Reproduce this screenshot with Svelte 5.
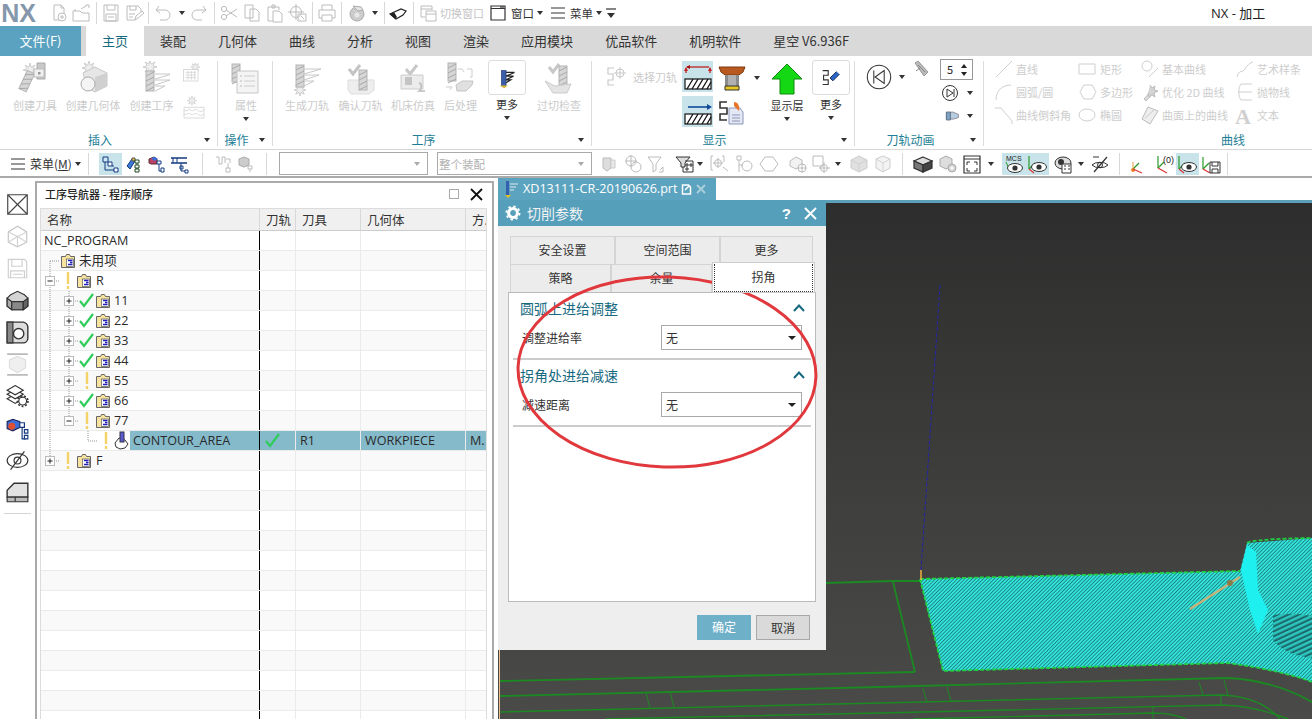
<script>
const G='#bcbcbc';
const line=(d,c=G,w=1)=>`<path d="${d}" fill="none" stroke="${c}" stroke-width="${w}"/>`;
const fillp=(d,f,s='none',w=1)=>`<path d="${d}" fill="${f}" stroke="${s}" stroke-width="${w}"/>`;
const burst=(x,y,r=7)=>{let p='';for(let i=0;i<16;i++){const a=i*Math.PI/8,q=i%2?r*.45:r;p+=(i?'L':'M')+(x+q*Math.cos(a)).toFixed(1)+' '+(y+q*Math.sin(a)).toFixed(1)}return fillp(p+'Z','#eee','#c4c4c4',.8)};
const drill=(x,y,h=22,s=0)=>`<g transform="translate(${x} ${y}) rotate(${s})"><rect x="-4" y="0" width="8" height="${h}" fill="#d6d6d6" stroke="#b4b4b4"/>${line(`M-4 5L4 1M-4 10L4 6M-4 15L4 11M-4 20L4 16`,'#a8a8a8')}</g>`;
const fins=(x,y)=>line(`M${x} ${y}L${x+17} ${y}L${x} ${y+5}M${x} ${y+6}L${x+15} ${y+6}L${x} ${y+11}M${x} ${y+12}L${x+10} ${y+12}L${x} ${y+17}`,'#c8c8c8');
const eye=(x=10,y=12,c='#333')=>`<ellipse cx="${x}" cy="${y}" rx="7.5" ry="4.5" fill="#fff" stroke="${c}"/><circle cx="${x}" cy="${y}" r="2.6" fill="${c}"/>`;
const hatch=(y)=>`<rect x="3" y="${y}" width="26" height="10" fill="#fff" stroke="#111" stroke-width="1.2"/>`+line(`M5 ${y+10}L11 ${y}M10 ${y+10}L16 ${y}M15 ${y+10}L21 ${y}M20 ${y+10}L26 ${y}M25 ${y+10}L29 ${y+3}`,'#111',1.3);
const sshape=(c='#666')=>line('M8 2H2V8H7V14H2V19H8',c,1.2);

const ic={
new:line('M5 2h7l3 3v12H5zM12 2v3h3')+`<circle cx="13" cy="14" r="4" fill="#fff" stroke="${G}"/>`+line('M13 12v4M11 14h4'),
open:line('M2 8h7l2 2h7v8H2zM4 8V6M10 6l5-3v-1M15 2h3v3'),
save:line('M3 2h14v16H3zM6 2v5h8V2M5 11h10v7H5zM7 14h6'),
saveas:line('M3 3h11l3 3v3M3 3v14h8M6 3v4h6V3M5 11h6M5 14h4')+line('M11 17l1-4 6-5 2 2-6 5z'),
undo:line('M6 3L3 7l4 3M3 7h9a5 5 0 0 1 0 10H7'),
redo:line('M14 3l3 4-4 3M17 7H8a5 5 0 0 0 0 10h5'),
cut:`<circle cx="5" cy="14" r="2.6" fill="none" stroke="${G}"/><circle cx="5" cy="6" r="2.6" fill="none" stroke="${G}"/>`+line('M7 7l11 7M7 13l11-7'),
copy:line('M3 2h8v13H3zM8 6h6l3 3v9H8z'),
paste:line('M3 4h11v3M3 4v14h5M7 2h3v3H7zM8 8h6l3 3v8H8z'),
clone:`<circle cx="8" cy="9" r="5.5" fill="none" stroke="${G}"/>`+line('M8 1v16M0 9h16M10 11h8v7h-8zM13 13l3 3'),
print:line('M5 7V2h10v5M2 7h16v8h-3M5 15H2V7M5 12h10v6H5z'),
blob:`<circle cx="10" cy="11" r="7" fill="#ccc" stroke="#aaa"/>`+fillp('M6 3l8 1 2 3-5 1z','#e6e6e6','#aaa')+`<circle cx="10" cy="12" r="2.5" fill="#e8e8e8"/>`,
erase:fillp('M2 11L13 6l5 2-3 4-7 4z','#fff','#222',1.2)+fillp('M2 11l4-2 3 5-2 2z','#222'),
swin:line('M3 3h11v4M3 3v11h4M3 6h11M8 8h10v10H8zM8 11h10'),
win:`<path d="M3 3h14v14H3z" fill="#fff" stroke="#333" stroke-width="1.2"/>`+line('M3 5.5h14','#333',1)+line('M12 4h4','#333',1.2),
burger:line('M3 5h14M3 10h14M3 15h14','#333',1),
qa:line('M5 6h10','#333',1.2)+fillp('M6 10h8l-4 5z','#333'),

s1:fillp('M3 3h5v5H3z','#cfe6f5','#123a80')+fillp('M8 8h4v4H8z','#fff','#123a80')+line('M5 8v8h9M12 12h2','#123a80')+fillp('M14 14h4v4h-4z','#fff','#123a80'),
s2:fillp('M4 12l5-7 3 2-5 8z','#3b7bd6','#123a80')+fillp('M9 4h3v3H9z','#f0c040','#555')+line('M14 6v12','#1a4a20')+fillp('M12 6h4v3h-4zM12 11h4v3h-4zM12 15h4v3h-4z','#fff','#1a4a20'),
s3:fillp('M3 5l5-2 3 2v5H5L3 9z','#c04068','#533')+fillp('M5 4l4-1 3 2-4 2z','#3a6fd8')+line('M13 9v8h3','#123a80')+fillp('M11 7h4v3h-4zM15 14h3v4h-3z','#fff','#123a80'),
s4:line('M2 4h16M2 9h16','#123a80',1.5)+line('M4 4v5M8 4v5','#123a80')+fillp('M11 12h3v3h-3zM16 16h3v3h-3z','#fff','#123a80')+line('M12 9v8h4','#123a80'),
s5:line('M3 3h3v7h3V3h3v6M13 5h4v4M15 9v9',G)+fillp('M13 14h4v4h-4z','#fff',G),
s6:fillp('M2 5l5-2 5 2v6l-5 2-5-2z','#ccc','#aaa')+line('M13 12v6',G)+fillp('M11 12h4v3h-4z','#fff',G),
cyl:fillp('M4 4h8v10l-4 3-4-3z','#ddd','#bbb')+fillp('M12 6h4v8h-4z','#e8e8e8','#ccc'),
lk:`<circle cx="7" cy="7" r="5" fill="none" stroke="${G}"/><circle cx="12" cy="13" r="5" fill="none" stroke="${G}"/>`+line('M1 7h12M7 1v12'),
fun:line('M1 3h13L9 10v6l-3 2v-8zM13 16l3-3v5h-4'),
fun2:fillp('M1 3h14L10 9v4H6V9z','#ddd','#333')+line('M10 7h8v11H8v-5M11 10h2v2h-2zM15 10h2v2h-2zM11 14h2v2h-2z','#333'),
brk:line('M3 2H1v14h2M12 2h2v6')+`<circle cx="8" cy="9" r="3.5" fill="none" stroke="${G}"/>`+line('M8 4v10M3 9h10M13 13l5 4'),
tc:fillp('M3 2h4v4H3z','#fff',G)+line('M5 6v12M5 11h4')+`<circle cx="13" cy="12" r="5" fill="none" stroke="${G}"/>`,
hex:line('M6 3h8l5 7-5 7H6l-5-7z'),
box2:fillp('M2 7l6-4 6 3v5l-6 4-6-3z','#f2f2f2',G)+`<circle cx="14" cy="14" r="4" fill="#fff" stroke="${G}"/>`+line('M14 9v10M9 14h10'),
sqc:line('M2 2h10v10H2zM13 8v11M8 14h11')+`<circle cx="13" cy="14" r="3.5" fill="none" stroke="${G}"/>`,
cube1:fillp('M10 2l8 4v8l-8 4-8-4V6z','#e0e0e0','#ccc')+line('M2 6l8 4 8-4M10 10v8','#cfcfcf'),
cube2:fillp('M9 2l7 3v9l-7 4-7-4V5z','#f3f3f3','#ccc')+line('M2 5l7 4 7-4M9 9v9','#d4d4d4'),
solid:fillp('M10 3l9 4-9 4-9-4z','#ddd','#333',1.2)+fillp('M1 7l9 4v7l-9-4z','#777','#333',1.2)+fillp('M19 7l-9 4v7l9-4z','#444','#333',1.2),
solidg:fillp('M2 5l6-3 6 3v7l-6 3-6-3z','#ddd','#aaa')+`<circle cx="14" cy="14" r="4" fill="#d4d4d4" stroke="#aaa"/><circle cx="14" cy="14" r="1.6" fill="#fff"/>`,
fit:fillp('M2 2h16v17H2z','#fff','#333',1.2)+line('M2 5h16','#333')+line('M5 8h3M5 8v3M15 8h-3M15 8v3M5 17h3M5 17v-3M15 17h-3M15 17v-3','#333'),
mcs:`<text x="2" y="7" font-size="7" font-family="Liberation Sans" fill="#222">MCS</text>`+line('M2 8l4 9','#2a9a2a')+eye(11,14),
axeye:line('M2 2v13','#2a9a2a',1.2)+line('M2 15l6-6','#2a9a2a',1.2)+line('M2 15l5 4','#d33',1.2)+eye(12,13),
eyel:fillp('M2 9a8 6 0 0 1 16 0 8 6 0 0 1-16 0z','#ddd','#333')+`<circle cx="8" cy="8" r="3" fill="#333"/>`+fillp('M9 10h9v9H9z','#fff','#333')+line('M11 12h2M15 12h2M11 15h2M15 15h2','#333'),
noeye:line('M2 11a9 5 0 0 1 16 0 9 5 0 0 1-16 0z','#333')+`<circle cx="10" cy="11" r="2.5" fill="none" stroke="#333"/>`+line('M4 18L17 3M3 3h6','#333',1.2),
ax0:fillp('M6 14a2 2 0 1 0 .1 0','#f08020')+line('M6 15L12 9','#2a9a2a',1.3)+line('M6 15V8','#e0a030',1)+line('M6 15l9 4','#d33',1.3),
ax1:line('M3 2v12','#2a9a2a',1.2)+line('M3 14l6-6','#2a9a2a',1.2)+line('M3 14l9 5','#d33',1.2)+`<text x="8" y="9" font-size="9" font-family="Liberation Sans" fill="#222">(0)</text>`,
axsv:line('M2 3v12','#2a9a2a',1.2)+line('M2 15l6-6','#2a9a2a',1.2)+line('M2 15l7 4','#d33',1.2)+fillp('M9 8h10v11H9z','#fff','#333')+line('M11 8v4h6V8M11 19v-4h6v4','#333'),

backb:`<circle cx="10" cy="10" r="9" fill="none" stroke="#333" stroke-width=".8"/>`+line('M6 5v10M14 5L7 10l7 5z','#333',.8),
fwd:`<circle cx="10" cy="10" r="7.5" fill="none" stroke="#333"/>`+line('M14 6v8M7 6l6 4-6 4z','#333'),
cone:fillp('M3 6l8-1 7 3v4l-7 2-8-1z','#b8cde0','#778')+fillp('M3 5h5v10H3z','#7fa3c4','#567'),
pin:fillp('M4 3l3-2 10 11-4 4z','#b9b9b9','#999')+line('M7 5l7 7M9 8l-4 3','#888'),
ln:line('M2 18L18 2','#cfcfcf'),
rect:line('M1 5h16v10H1z','#cfcfcf'),
base:`<circle cx="7" cy="7" r="5" fill="none" stroke="#cfcfcf"/>`+line('M9 18l9-9','#cfcfcf'),
spl:line('M2 18c2-8 6-4 8-8s5-6 8-7','#cfcfcf'),
arc:line('M2 18C2 8 9 3 17 3','#cfcfcf'),
poly:line('M6 3h8l4 7-4 7H6l-4-7z','#cfcfcf'),
opt:fillp('M4 17l8-9 2 2-8 9z','#ddd','#bbb')+fillp('M10 3l2 3 3-2-1 4 4 1-4 2 1 4-3-2-3 2-1-4','#d4d4d4','#bbb'),
par:line('M17 2H6C3 6 3 14 6 18h11M3 10h14','#cfcfcf'),
cham:line('M1 3h6l11 13v3','#cfcfcf'),
ell:`<ellipse cx="9" cy="10" rx="8" ry="6" fill="none" stroke="#cfcfcf"/>`,
surf:fillp('M8 2l10 4-8 13-8-5z','#eee','#bbb')+line('M5 13l9-8','#ccc'),
A:`<text x="0" y="19" font-size="22" font-family="Liberation Serif" font-weight="bold" fill="#d0d0d0">A</text>`,

crx:line('M1.5 1.5h17v17h-17zM1.5 1.5l17 17M18.5 1.5l-17 17','#444',1),
wire:fillp('M10 1l8 5v9l-8 4-8-4V6z','none','#c4c4c4')+line('M2 6l8 4 8-4M10 10v9M2 15l8-5 8 5','#d4d4d4'),
disk:line('M2 2h14l2 2v14H2zM5 2v6h9V2M4 12h12v6H4zM6 15h8','#cfcfcf'),
body:fillp('M4 5l6-3 6 3 3 3v7l-4 3H5l-4-3V8z','#d4d4d4','#333')+fillp('M1 8l4 3v7l-4-3z','#aaa','#333')+fillp('M5 11h10v7H5z','#888','#333')+fillp('M15 11l4-3v7l-4 3z','#666','#333'),
hole:fillp('M1 1h14a5 5 0 0 1 4 4v10a4 4 0 0 1-4 4H1z','#ddd','#333',1.2)+fillp('M1 1h5v18H1z','#888','#333')+`<circle cx="11" cy="11" r="4.5" fill="#fff" stroke="#333" stroke-width="1.2"/>`,
flat:line('M1 1h18M1 19h18','#bbb',1.6)+fillp('M10 3l7 3v7l-7 4-7-4V6z','#efefef','#ddd'),
layer:fillp('M1 12l7-4 7 4-7 4z','#fff','#333')+fillp('M1 8l7-4 7 4-7 4z','#fff','#333')+fillp('M1 4.5l7-4 7 4-7 4z','#fff','#333')+`<circle cx="14.5" cy="14" r="3.4" fill="#fff" stroke="#333"/><circle cx="14.5" cy="14" r="4.6" fill="none" stroke="#333" stroke-width="1.4" stroke-dasharray="1.6 1.6"/>`,
assem:fillp('M1 4l5-2 6 2v5l-6 3-5-2z','#3a6fd8','#225')+`<circle cx="5" cy="8" r="3" fill="#e05030"/>`+line('M14 7v12h3','#123a80')+fillp('M12 5h4v4h-4zM16 11h3v3h-3zM16 16h3v3h-3z','#fff','#123a80'),
hide:line('M1 10a9 6 0 0 1 18 0 9 6 0 0 1-18 0z','#333')+`<circle cx="10" cy="10" r="3" fill="none" stroke="#333"/>`+line('M4 18L16 2','#333'),
wedge:fillp('M7 2h12v12H1V8z','#e2e2e2','#333',1.2)+fillp('M1 14h18v4H1z','#bbb','#333')+line('M8 14v4','#333'),
};

const big={
ctool:burst(13,9)+drill(14,11,20,25)+fillp('M20 2h8v16H20z','#c8c8c8','#aaa')+fillp('M17 8h10v8H17z','#f0f0f0','#bbb')+`<rect x="21" y="11" width="2.5" height="2.5" fill="#999"/>`,
cgeo:burst(14,7)+fillp('M8 12l12-6 12 6v13l-12 6-8-4z','#e6e6e6','#c8c8c8')+fillp('M20 16l12-4v13l-12 6z','#d0d0d0')+`<circle cx="13" cy="23" r="7" fill="#f4f4f4" stroke="#aaa"/>`,
cop:burst(16,6)+drill(16,10,20)+fins(21,13),
prop:drill(8,3,18)+fillp('M9 10h21v22H9z','#f4f4f4','#c6c6c6')+line('M16 15h11M16 20h11M16 25h11','#ccc')+line('M12 15h2M12 20h2M12 25h2','#bbb'),
gen:burst(11,29,6)+drill(11,4,22)+fins(15,8),
ver:line('M6 8l4 5 7-9','#c4c4c4',3)+fillp('M5 19h26v10l-5 4H8l-3-4z','#eee','#ddd')+drill(20,9,20),
sim:line('M11 8l4 5 7-9','#c8c8c8',3)+fillp('M6 14h22v14H6z','#ececec','#ccc')+fillp('M10 16h7v8h-7z','#c4c4c4')+line('M24 22c3 0 3 6 0 8h6','#bbb',1.5),
post:drill(9,2,18)+fillp('M13 24l6-4h11l-1 4-6 6H14z','#e0e0e0','#c4c4c4')+line('M15 8h4l2 3M27 8h2v8h-2M24 8h3M3 26h6l-2 3','#ccc'),
cut:line('M8 6l4 5 6-8','#c8c8c8',3)+drill(22,5,20)+fillp('M4 20l10 5 16-2-4 9H12z','#e4e4e4','#ccc'),
more1:`<rect x="8" y="6" width="5" height="16" fill="#3a5ea8" stroke="#223a70" stroke-width=".7"/>`+`<path d="M6 22h9l-4 3z" fill="#d9b030"/>`+line('M13 8h9l-9 4M13 12h8l-8 4M13 16h5l-5 3','#222',1.3),
more2:line('M5 6H11V11H6V16H11V21H5','#333',1.2)+fillp('M13 14l7-7 3 3-7 7z','#2a66c8','#124')+line('M19 6l4 4','#9bc'),
c1:burst(20,6)+`<rect x="2" y="10" width="22" height="17" fill="#fff" stroke="#c8c8c8"/>`+line('M5 14h16M5 18h16M5 22h16M9 12v13M14 12v13M19 12v13','#ccc'),
c2:burst(15,7)+line('M3 17h30v16H3zM3 21c4 4 6-3 10 0s6-3 10 0 6 3 10 0M3 27c4 3 6-3 10 0s6-3 10 0 6 3 10 0','#c8c8c8'),
selt:sshape('#c8c8c8')+`<circle cx="14" cy="7" r="4" fill="none" stroke="#c8c8c8"/>`+line('M14 1v12M8 7h12','#c8c8c8'),
h1:line('M4 11v-5M28 11v-5','#b22',1.3)+line('M5 5h22','#b22',1.3)+fillp('M2 9l2-4 2 4zM26 9l2-4 2 4z','#c22')+fillp('M4 5l4-2v4z','#a11')+hatch(17),
h2:line('M6 10h19','#124a9a',1.6)+fillp('M25 7l5 3-5 3z','#124a9a')+hatch(17),
toolc:fillp('M1 1h26l-2 5-4 3H7L3 6z','#b85a20','#7a3a10')+fillp('M7 9h14v11H7z','#8a8a8a')+fillp('M10 9h8v11h-8z','#b0b0b0')+fillp('M7 20h14v4H7z','#e8c820','#333'),
doc:line('M9 2H2v6h7v6H2v6h7','#333',1.6)+fillp('M11 8h11l3 4v12H11z','#e4e8f4','#8a97b8')+fillp('M16 2c4 0 6 4 5 9l-3-3-2-2z','#e8762a')+line('M14 15h8M14 18h8M14 21h8','#8a97b8'),
arrow:fillp('M15 1l15 15h-8v15H8V16H0z','#15d815','#0e8a0e'),
};

const I=(cx,n,o={})=>({k:'i',x:cx-(o.b||20)/2,w:o.b||20,n,on:o.on});
const S=x=>({k:'s',x,w:1});
const C=cx=>({k:'c',x:cx-3.5,w:7});
const T=(x,w,text,cls='')=>({k:'t',x,w,text,cls});
const flow=(a,x0=0)=>{let e=x0;return a.map(it=>{const r={...it,ml:it.x-e};e=it.x+it.w;return r})};

const title=[
I(59,'new'),I(81,'open'),S(96),I(111,'save'),I(134,'saveas'),S(148),I(163,'undo'),C(182),I(200,'redo'),S(215),
I(230,'cut'),I(253,'copy'),I(276,'paste'),I(299,'clone'),S(313),I(328,'print'),S(342),I(358,'blob'),C(376),S(386),I(400,'erase'),S(415),I(430,'swin'),
T(442,44,'切换窗口','dis'),I(500,'win'),T(513,23,'窗口'),C(542),I(561,'burger',{b:14}),T(573,23,'菜单'),C(602),I(615,'qa',{b:12})
];
const tools=[
I(18,'burger',{b:14}),T(30,41,'菜单(M)','mn'),C(78),S(89),
I(111,'s1',{b:23,on:1}),I(134,'s2',{b:22}),I(157,'s3',{b:22}),I(180,'s4',{b:22}),S(203),I(224,'s5',{b:22}),I(248,'s6',{b:22}),S(267),
{k:'combo',x:280,w:149,text:''},{k:'combo',x:438,w:155,text:'整个装配'},
I(610,'cyl',{b:20}),I(635,'lk',{b:22}),I(658,'fun',{b:20}),I(686,'fun2',{b:20}),C(701),I(722,'brk',{b:20}),I(746,'tc',{b:20}),I(771,'hex',{b:20}),I(800,'box2',{b:20}),I(823,'sqc',{b:20}),C(840),I(862,'cube1',{b:20}),I(887,'cube2',{b:20}),S(905),
I(926,'solid',{b:20}),I(951,'solidg',{b:20}),I(975,'fit',{b:20}),C(994),I(1018,'mcs',{b:24,on:1}),I(1041,'axeye',{b:23,on:1}),I(1067,'eyel',{b:20}),C(1085),I(1105,'noeye',{b:20}),S(1124),
I(1142,'ax0',{b:20}),I(1170,'ax1',{b:20}),I(1192,'axeye',{b:23,on:1}),I(1216,'axsv',{b:20}),S(1232)
];
const curve=[
[I(1004,'ln',{b:18}),T(1016,24,'直线'),I(1088,'rect',{b:18}),T(1100,24,'矩形'),I(1150,'base',{b:18}),T(1162,46,'基本曲线'),I(1245,'spl',{b:18}),T(1257,46,'艺术样条')],
[I(1004,'arc',{b:18}),T(1016,40,'圆弧/圆'),I(1088,'poly',{b:18}),T(1100,36,'多边形'),I(1150,'opt',{b:18}),T(1162,66,'优化 2D 曲线'),I(1245,'par',{b:18}),T(1257,36,'抛物线')],
[I(1004,'cham',{b:18}),T(1016,56,'曲线倒斜角'),I(1088,'ell',{b:18}),T(1100,24,'椭圆'),I(1150,'surf',{b:18}),T(1162,68,'曲面上的曲线'),I(1245,'A',{b:18}),T(1257,24,'文本')]
];
const tabs=['主页','装配','几何体','曲线','分析','视图','渲染','应用模块','优品软件','机明软件','星空 V6.936F'];
const rail=['crx','wire','disk','body','hole','flat','layer','assem','hide','wedge'];

const nodes=[
{t:'NC_PROGRAM',x:44},
{t:'未用项',x:79,f:61,h:[50,60],v:[[50,10,20]]},
{t:'R',x:96,e:50,m:1,b:68,f:77,v:[[50,0,20]]},
{t:'11',x:114,e:69,c:80,f:96,v:[[50,0,20],[69,0,20]]},
{t:'22',x:114,e:69,c:80,f:96,v:[[50,0,20],[69,0,20]]},
{t:'33',x:114,e:69,c:80,f:96,v:[[50,0,20],[69,0,20]]},
{t:'44',x:114,e:69,c:80,f:96,v:[[50,0,20],[69,0,20]]},
{t:'55',x:114,e:69,b:87,f:96,v:[[50,0,20],[69,0,20]]},
{t:'66',x:114,e:69,c:80,f:96,v:[[50,0,20],[69,0,20]]},
{t:'77',x:114,e:69,m:1,b:87,f:96,v:[[50,0,20],[69,0,10]]},
{t:'CONTOUR_AREA',x:130,sel:1,b:106,op:1,h:[88,98],v:[[50,0,20],[88,0,10]],tool:'R1',geo:'WORKPIECE',mth:'M.',chk:1},
{t:'F',x:96,e:50,b:68,f:77,v:[[50,0,10]]},
];
const rows=Array.from({length:25},(_,i)=>nodes[i]||{});
const folder=x=>`<g transform="translate(${x} 3)"><path d="M.5 2.5h4l1-2h3l1 2h4v11H.5z" fill="#f6e3a0" stroke="#666"/><rect x="5.5" y="5" width="7" height="7.5" fill="#fff" stroke="#444" stroke-width=".6"/><path d="M7 6.5h4.5M9 8.5h2.5M7 10.5h4.5" stroke="#2222bb" stroke-width="1.3" fill="none"/></g>`;
const bang=x=>`<rect x="${x-1.2}" y="1" width="2.4" height="12" fill="#f5d266"/><rect x="${x-1.2}" y="15" width="2.4" height="3" fill="#f5d266"/>`;
const check=(x,y=0)=>`<path d="M${x} ${y+10}l4 5 9-12" fill="none" stroke="#2fcc5a" stroke-width="2.2"/>`;
const expd=(x,m)=>`<rect x="${x-4.5}" y="5.5" width="9" height="9" fill="#fff" stroke="#bbb"/><path d="M${x-2.5} 10h5${m?'':`M${x} 7.5v5`}" stroke="#222" fill="none"/>`;
const optic=x=>`<path d="M${x+1} 12l4-5 6 2 3 4-3 4-5 1-4-2z" fill="#fff" stroke="#333"/><rect x="${x+6}" y="1" width="4" height="10" fill="#5b5bd0" stroke="#334"/>`;
const tree=r=>{let s='';for(const [x,a,b] of (r.v||[]))s+=`<path d="M${x} ${a}V${b}" stroke="#999" stroke-dasharray="1 1" fill="none"/>`;
 const hs=r.h||(r.e?[r.e,(r.e+9)]:null);if(hs)s+=`<path d="M${hs[0]} 10H${hs[1]}" stroke="#999" stroke-dasharray="1 1" fill="none"/>`;
 if(r.e)s+=expd(r.e,r.m);if(r.b)s+=bang(r.b);if(r.c)s+=check(r.c);if(r.f)s+=folder(r.f);if(r.op)s+=optic(r.b+8);return s};
const treeW=r=>r.sel?89:r.x-43;
</script>

{#snippet strip(items,x0=0)}
 <div class="strip">
 {#each flow(items,x0) as it}
  {#if it.k==='i'}
   <span class="slot" class:on={it.on} style="margin-left:{it.ml}px;width:{it.w}px"><svg width="20" height="20" viewBox="0 0 20 20">{@html ic[it.n]}</svg></span>
  {:else if it.k==='s'}
   <span class="sp" style="margin-left:{it.ml}px"></span>
  {:else if it.k==='c'}
   <span class="caret" style="margin-left:{it.ml}px"></span>
  {:else if it.k==='t'}
   <span class="stx {it.cls}" style="margin-left:{it.ml}px;width:{it.w}px">{#if it.cls==='mn'}菜单(<u>M</u>){:else}{it.text}{/if}</span>
  {:else}
   <span class="combo" style="margin-left:{it.ml}px;width:{it.w}px">{it.text}<i class="caret light"></i></span>
  {/if}
 {/each}
 </div>
{/snippet}

{#snippet bigb(n,label,w,opt={})}
 <div class="big" style="width:{w}px">
  <div class="bigicon" class:boxed={opt.box}><svg width={opt.box?26:36} height={opt.box?26:36} viewBox={opt.box?'0 0 28 28':'0 0 36 36'}>{@html big[n]}</svg></div>
  <span class="lab" class:act={opt.act}>{label}</span>
  {#if opt.caret}<span class="caret mid"></span>{/if}
 </div>
{/snippet}

{#snippet foot(label)}
 <div class="foot"><span>{label}</span><i class="caret"></i></div>
{/snippet}

<div class="app">
 <header class="titlebar">
  <span class="nx">NX</span>
  {@render strip(title,36)}
  <span class="apptitle">NX - 加工</span>
 </header>

 <nav class="tabs">
  <span class="file">文件(F)</span>
  <span class="tgap"></span>
  {#each tabs as t,i}<span class="tab" class:active={i===0}>{t}</span>{/each}
 </nav>

 <section class="ribbon">
  <div class="grp g1">
   <div class="body">
    {@render bigb('ctool','创建刀具',58)}
    {@render bigb('cgeo','创建几何体',58)}
    {@render bigb('cop','创建工序',59)}
    <div class="smallcol">
     <svg width="24" height="24" viewBox="0 0 36 36">{@html big.c1}</svg>
     <svg width="24" height="24" viewBox="0 0 36 36">{@html big.c2}</svg>
    </div>
   </div>
   {@render foot('插入')}
  </div>
  <div class="grp g2">
   <div class="body">{@render bigb('prop','属性',56,{caret:1})}</div>
   {@render foot('操作')}
  </div>
  <div class="grp g3">
   <div class="body">
    {@render bigb('gen','生成刀轨',54)}
    {@render bigb('ver','确认刀轨',53)}
    {@render bigb('sim','机床仿真',52)}
    {@render bigb('post','后处理',43)}
    {@render bigb('more1','更多',50,{box:1,caret:1,act:1})}
    {@render bigb('cut','过切检查',54)}
   </div>
   {@render foot('工序')}
  </div>
  <div class="grp g4">
   <div class="body">
    <div class="selp"><svg width="22" height="22" viewBox="0 0 22 22">{@html big.selt}</svg><span class="lab">选择刀轨</span></div>
    <div class="hcol">
     <span class="hl"><svg width="32" height="30" viewBox="0 0 32 30">{@html big.h1}</svg></span>
     <span class="hl"><svg width="32" height="30" viewBox="0 0 32 30">{@html big.h2}</svg></span>
    </div>
    <div class="ccol">
     <div class="crow"><svg width="28" height="25" viewBox="0 0 28 25">{@html big.toolc}</svg><span class="caret"></span></div>
     <div class="crow"><svg width="26" height="26" viewBox="0 0 26 26">{@html big.doc}</svg></div>
    </div>
    <div class="big" style="width:50px">
     <div class="bigicon"><svg width="30" height="32" viewBox="0 0 30 32">{@html big.arrow}</svg></div>
     <span class="lab act">显示层</span><span class="caret mid"></span>
    </div>
    {@render bigb('more2','更多',38,{box:1,caret:1,act:1})}
   </div>
   {@render foot('显示')}
  </div>
  <div class="grp g5">
   <div class="body">
    <div class="animb"><svg width="26" height="26" viewBox="0 0 20 20">{@html ic.backb}</svg><span class="caret"></span></div>
    <div class="animc">
     <div class="arow"><svg width="20" height="20" viewBox="0 0 20 20">{@html ic.pin}</svg><span class="spin">5<i><b></b><b class="dn"></b></i></span></div>
     <div class="arow r"><svg width="20" height="20" viewBox="0 0 20 20">{@html ic.fwd}</svg><span class="caret"></span></div>
     <div class="arow r"><svg width="16" height="16" viewBox="0 0 20 20">{@html ic.cone}</svg><span class="caret"></span></div>
    </div>
   </div>
   {@render foot('刀轨动画')}
  </div>
  <div class="grp g6">
   <div class="body curves">
    {#each curve as r}{@render strip(r,984)}{/each}
   </div>
   {@render foot('曲线')}
  </div>
 </section>

 <section class="toolbar">{@render strip(tools)}</section>

 <main class="main">
  <aside class="rail">
   {#each rail as n}<span class="ri"><svg width="23" height="23" viewBox="0 0 20 20">{@html ic[n]}</svg></span>{/each}
   <span class="railsep"></span>
  </aside>

  <section class="panel">
   <div class="phead">
    <strong>工序导航器 - 程序顺序</strong>
    <span class="restore"></span>
    <svg width="13" height="13" viewBox="0 0 13 13"><path d="M1 1l11 11M12 1L1 12" stroke="#111" stroke-width="1.8"/></svg>
   </div>
   <div class="table">
    <div class="thead">
     <span class="c0">名称</span><span class="c1">刀轨</span><span class="c2">刀具</span><span class="c3">几何体</span><span class="c4">方.</span>
    </div>
    {#each rows as r,i}
     <div class="row" class:alt={i%2===1} class:sel={r.sel}>
      <div class="c0">
       {#if r.t}
       <svg class="tree" width={treeW(r)} height="20" viewBox="41 0 {treeW(r)} 20">{@html tree(r)}</svg>
       <span class="nm">{r.t}</span>
       {/if}
      </div>
      <div class="c1">{#if r.chk}<svg width="20" height="20" viewBox="0 0 20 20">{@html check(4)}</svg>{/if}</div>
      <div class="c2">{r.tool||''}</div>
      <div class="c3">{r.geo||''}</div>
      <div class="c4">{r.mth||''}</div>
     </div>
    {/each}
   </div>
  </section>

  <section class="work">
   <div class="filetabs">
    <div class="filetab">
     <svg width="16" height="18" viewBox="0 0 16 18"><rect x="3" y="1" width="3" height="14" fill="#355fb0"/><path d="M7 4h8M7 7h6M7 10h4" stroke="#dfe8ee" fill="none"/><path d="M2 15h6l-3 3z" fill="#e8c020"/></svg>
     <span>XD13111-CR-20190626.prt</span>
     <svg width="11" height="11" viewBox="0 0 11 11"><path d="M1.5 1h6l2 2v7h-8z" fill="none" stroke="#fff" stroke-width="1.5"/><path d="M4 6l4-4" stroke="#fff" stroke-width="1.5"/></svg>
     <svg width="10" height="10" viewBox="0 0 10 10"><path d="M1 1l8 8M9 1L1 9" stroke="#a9cfdd" stroke-width="2"/></svg>
    </div>
   </div>
   <div class="viewport">
    <svg class="scene" width="814" height="519" viewBox="498 200 814 519">
     <defs>
      <linearGradient id="vbg" x1="0" y1="0" x2="0" y2="1"><stop offset="0" stop-color="#2d2d2d"/><stop offset=".55" stop-color="#3e3e3c"/><stop offset="1" stop-color="#4a4a48"/></linearGradient>
      <pattern id="tp" width="2.6" height="2.6" patternUnits="userSpaceOnUse" patternTransform="rotate(45)"><rect width="2.6" height="2.6" fill="#1a8082"/><rect width="1.7" height="2.6" fill="#35e6dc"/></pattern>
      <pattern id="tp2" width="4.5" height="4.5" patternUnits="userSpaceOnUse" patternTransform="rotate(65)"><rect width="4.5" height="4.5" fill="#1d6a6c"/><rect width="2.4" height="4.5" fill="#2cc8c0"/></pattern>
     </defs>
     <rect x="498" y="200" width="814" height="519" fill="url(#vbg)"/>
     <rect x="498" y="200" width="814" height="3" fill="#5b9fb9"/>
     <rect x="499" y="650" width="1" height="69" fill="#f0c090"/>
     <g fill="none" stroke="#1c8a22" stroke-width="1.8">
      <path d="M825 583L892 581L920 581M893 582L915 672"/>
      <path d="M500 681L915 672"/>
      <path d="M500 696L880 687L1227 678Q1273 680 1312 702"/>
      <path d="M500 712L880 703L1220 695Q1260 696 1280 719" stroke-width="1.4"/>
      <path d="M605 719L880 713L1223 705Q1255 706 1288 719" stroke-width="1.4"/>
      <path d="M913 719L1153 713Q1172 713 1186 719" stroke-width="1.4"/>
      <path d="M646 693L650 708M670 692L674 707M923 688L927 702M947 687L951 701M1199 682L1203 695M1224 680L1228 695M1221 696V704M1153 707V719" stroke-width="1"/>
     </g>
     <path d="M920 579L1240 571L1247 543L1312 538V682Q1280 670 1227 663L943 671Z" fill="url(#tp)"/>
     <path d="M1273 615Q1295 612 1312 616V658Q1285 655 1273 640Z" fill="url(#tp2)"/>
     <path d="M1241 570L1247 545L1256 552L1258 590L1268 610L1258 634L1250 610Z" fill="#1ef0f0"/>
     <path d="M920 579L1240 571M1247 543Q1252 539 1312 538M920 579L943 671L1227 663Q1280 670 1312 682" fill="none" stroke="#1fd040" stroke-width="1.8" stroke-dasharray="4 2"/>
     <path d="M940 285L921 570" stroke="#2323a8" stroke-width="1" stroke-dasharray="4 2"/>
     <path d="M921 570V580" stroke="#f0b040" stroke-width="1.5"/>
     <path d="M1190 609L1240 577" stroke="#c9b27a" stroke-width="2.4"/>
     <circle cx="1230" cy="583" r="3" fill="#8c7a48"/>
    </svg>

    <div class="dialog">
     <div class="dhead">
      <svg width="16" height="16" viewBox="0 0 16 16"><circle cx="8" cy="8" r="4.4" fill="none" stroke="#fff" stroke-width="3"/><circle cx="8" cy="8" r="6.6" fill="none" stroke="#fff" stroke-width="1.8" stroke-dasharray="2.4 2.8"/></svg>
      <span class="dt">切削参数</span>
      <b class="q">?</b>
      <svg width="13" height="13" viewBox="0 0 13 13"><path d="M1 1l11 11M12 1L1 12" stroke="#fff" stroke-width="2"/></svg>
     </div>
     <div class="dbody">
      <div class="trow r1"><span class="t1">安全设置</span><span class="t2">空间范围</span><span class="t3">更多</span></div>
      <div class="trow r2"><span class="t4">策略</span><span class="t5">余量</span><span class="t6"><em>拐角</em></span></div>
      <div class="pane">
       <div class="sec">
        <div class="shead"><span>圆弧上进给调整</span><svg width="12" height="8" viewBox="0 0 12 8"><path d="M1 7l5-5.5L11 7" fill="none" stroke="#17697f" stroke-width="2"/></svg></div>
        <div class="srow"><span>调整进给率</span><span class="pick"><span>无</span><i class="caret big-c"></i></span></div>
       </div>
       <div class="sec">
        <div class="shead"><span>拐角处进给减速</span><svg width="12" height="8" viewBox="0 0 12 8"><path d="M1 7l5-5.5L11 7" fill="none" stroke="#17697f" stroke-width="2"/></svg></div>
        <div class="srow"><span>减速距离</span><span class="pick"><span>无</span><i class="caret big-c"></i></span></div>
       </div>
      </div>
      <div class="dfoot"><span class="ok">确定</span><span class="cancel">取消</span></div>
     </div>
    </div>
    <svg class="mark" width="320" height="210" viewBox="0 0 320 210"><ellipse cx="160" cy="103" rx="149" ry="95" transform="rotate(2 160 103)" fill="none" stroke="#e0383c" stroke-width="3"/></svg>
   </div>
  </section>
 </main>
</div>

<style>
:global(body){margin:0;background:#fff}
.app{width:1312px;height:719px;overflow:hidden;display:flex;flex-direction:column;font-family:"Noto Sans CJK SC","Open Sans",sans-serif;color:#222;background:#fff;font-size:12px}
svg{display:block;flex:none}
.titlebar{height:26px;flex:none;display:flex;align-items:center;position:relative}
.nx{width:36px;text-align:right;font:bold 25px/26px "Liberation Sans",sans-serif;color:#8597aa}
.titlebar .strip{flex:1}
.apptitle{position:absolute;left:1211px;top:4px;font:13px/18px "Open Sans","Noto Sans CJK SC",sans-serif;color:#222}
.strip{display:flex;align-items:center;height:100%;white-space:nowrap}
.slot{display:flex;align-items:center;justify-content:center;flex:none;height:22px}
.slot.on{background:#c9e3ea}
.slot svg{overflow:visible}
.sp{flex:none;width:1px;height:22px;background:#d8d8d8}
.caret{display:inline-block;flex:none;width:0;height:0;border:3.5px solid transparent;border-top:4px solid #333;border-bottom:0}
.caret.light{border-top-color:#aaa;margin-left:auto}
.stx{flex:none;font-size:11.5px;line-height:16px;color:#333}
.stx.dis{color:#c4c4c4;font-size:11px}
.stx.mn{font-size:12px}
.tabs{height:30px;flex:none;background:#d9d9d9;display:flex;align-items:stretch;font-size:13px;color:#333;line-height:30px}
.file{width:81px;background:#5aa2bf;color:#fff;text-align:center}
.tgap{width:5px}
.tab{padding:0 16px}
.tab.active{background:#fff;color:#17697f}
.ribbon{height:93px;flex:none;display:flex;overflow:hidden;border-bottom:1px solid #d8d8d8;box-sizing:content-box}
.grp{flex:none;display:flex;flex-direction:column;box-sizing:border-box;height:85px;border-right:1px solid #dcdcdc;margin-top:5px}
.g1{width:218px}.g2{width:55px}.g3{width:319px}.g4{width:263px}.g5{width:129px}.g6{width:515px;border:0}
.body{flex:none;height:71px;box-sizing:border-box;display:flex;margin-top:-5px;padding-top:4px}
.g1 .body{padding-left:6px}.g3 .body{padding-left:7px}
.foot{flex:none;height:24px;box-sizing:border-box;padding-top:1px;display:flex;align-items:center;justify-content:center;padding-right:17px;position:relative;color:#1e7e96;font-size:12px}
.foot i{position:absolute;right:7px;top:11px}
.big{flex:none;display:flex;flex-direction:column;align-items:center}
.bigicon{height:37px;display:flex;align-items:center;justify-content:center}
.bigicon.boxed{width:38px;height:35px;box-sizing:border-box;border:1px solid #ddd;border-radius:3px;margin-bottom:1px}
.lab{font-size:11px;line-height:14px;color:#cbcbcb;white-space:nowrap}
.big .lab{margin-top:1px}
.lab.act{color:#333}
.caret.mid{margin-top:5px}
.smallcol{flex:none;width:26px;display:flex;flex-direction:column;gap:9px;align-items:center;margin-top:3px}
.selp{width:90px;flex:none;display:flex;align-items:center;gap:5px;padding-left:14px;box-sizing:border-box;height:34px}
.hcol{width:36px;flex:none;display:flex;flex-direction:column;gap:4px;margin-top:1px}
.hl{width:31px;height:31px;background:#c9e3ea;display:flex;align-items:center;justify-content:center}
.ccol{width:44px;flex:none;display:flex;flex-direction:column;gap:9px;margin-top:5px}
.crow{display:flex;align-items:center;gap:8px;height:26px}
.animb{width:56px;flex:none;display:flex;align-items:center;gap:7px;padding-left:11px;box-sizing:border-box;height:34px}
.animc{flex:none;width:64px;display:flex;flex-direction:column;margin-top:-2px}
.arow{height:23px;display:flex;align-items:center;gap:9px;flex:none}
.arow.r{justify-content:flex-end;padding-right:2px;gap:7px}
.spin{width:33px;height:21px;box-sizing:border-box;border:1px solid #999;font-size:11px;line-height:19px;padding-left:6px;position:relative}
.spin i{position:absolute;right:5px;top:4px;display:flex;flex-direction:column;gap:4px}
.spin b{width:0;height:0;border:3px solid transparent;border-bottom:4px solid #222;border-top:0}
.spin b.dn{border-bottom:0;border-top:4px solid #222}
.curves{display:block;padding-top:1px}
.curves :global(.strip){height:23px}
.curves :global(.stx){font-size:11px;color:#cdcdcd}
.toolbar{height:25px;padding-top:1px;border-bottom:2px solid #aaa;flex:none;box-sizing:content-box}
.combo{flex:none;box-sizing:border-box;height:23px;border:1px solid #aaa;display:flex;align-items:center;padding:0 7px 0 1px;font-size:11.5px;color:#b0b0b0;background:#fff}
.main{flex:1;min-height:0;display:flex}
.rail{width:35px;flex:none;display:flex;flex-direction:column;align-items:center;padding-top:10px;box-sizing:border-box}
.ri{height:32px;display:flex;align-items:center;justify-content:center;flex:none}
.railsep{width:27px;height:1px;background:#d4d4d4;margin-top:5px}
.panel{width:459px;flex:none;box-sizing:border-box;border:solid #aaa;border-width:2px 2px 0 2px;margin-top:3px;padding:0 4px 0 3px;overflow:hidden;background:#fff}
.phead{height:25px;box-sizing:border-box;padding:0 0 3px 5px;display:flex;align-items:center}
.phead strong{font-size:11px;font-weight:500;color:#222;flex:1}
.restore{width:10px;height:10px;border:1px solid #aaa;margin-right:11px;box-sizing:border-box}
.phead svg{margin-right:5px}
.table{width:447px;border:solid #dcdcdc;border-width:1px 1px 0 1px;box-sizing:border-box;overflow:hidden}
.thead{height:21px;display:flex;background:#f0f0f0;border-bottom:1px solid #ccc;box-sizing:content-box;line-height:21px;font-size:12.5px;color:#333}
.thead span{box-sizing:border-box;padding-left:6px;border-right:1px solid #d8d8d8;flex:none;white-space:nowrap}
.c0{width:219px;flex:none}.c1{width:36px}.c2{width:65px}.c3{width:105px}.c4{width:21px;border-right:0!important}
.row{height:20px;display:flex;box-sizing:border-box;border-bottom:1px solid #ebebeb;font:12.6px/19px "Open Sans","Noto Sans CJK SC",sans-serif;color:#2a2a2a}
.row.alt{background:#f9f9f9}
.row>div{flex:none;box-sizing:border-box;border-right:1px solid #ebebeb;padding-left:4px}
.row>.c0{padding:0;display:flex;border-right:1px solid #000;overflow:hidden}
.row.sel>div:not(.c0){background:#85bacb}
.row.sel>.c1{padding-left:2px}
.row.sel .nm{flex:1;background:#85bacb;padding-left:3px}
.tree{overflow:visible}
.nm{white-space:nowrap;padding-left:2px}
.work{flex:1;min-width:0;margin-left:4px;display:flex;flex-direction:column}
.filetabs{height:22px;flex:none;background:#fff}
.filetab{width:218px;height:22px;background:#5ba3bf;color:#fff;display:flex;align-items:center;gap:4px;padding-left:5px;box-sizing:border-box;font:12.6px/22px "Open Sans",sans-serif}
.viewport{flex:1;position:relative;overflow:hidden}
.scene{position:absolute;inset:0}
.dialog{position:absolute;left:0;top:0;width:328px;height:450px;background:#eee;display:flex;flex-direction:column}
.dhead{height:26px;flex:none;background:#559fbb;color:#fff;display:flex;align-items:center;padding-left:7px}
.dt{margin-left:6px;font-size:14px;flex:1;color:#f2f2f2}
.q{font:bold 15px "Liberation Sans",sans-serif;margin-right:13px}
.dhead svg:last-child{margin-right:9px}
.dbody{flex:1;padding:10px 0 0 10px}
.trow{display:flex;height:28px;padding-left:2px;text-align:center;font-size:12px;line-height:26px;color:#333}
.trow span{box-sizing:border-box;border:1px solid #d4d4d4;border-bottom:0;background:#ececec;flex:none}
.t1{width:105px}.t2{width:105px}.t3{width:93px}
.t4{width:101px}.t5{width:101px}
.trow .t6{width:103px;height:31px;margin:-2px 0 -1px;background:#fff;border:1px solid #ccc;position:relative;z-index:2;padding:1px;line-height:26px}
.t6 em{display:block;height:27px;font-style:normal;border:1px dotted #333;border-width:0 1px 1px 1px}
.pane{width:308px;height:310px;box-sizing:border-box;background:#fff;border:1px solid #bbb;padding:0 4px;position:relative}
.sec{border-bottom:2px solid #ccc;height:67px;box-sizing:border-box}
.shead{height:32px;box-sizing:border-box;padding:0 6px 2px 7px;display:flex;align-items:center;justify-content:space-between;font-size:14px;color:#17697f}
.srow{display:flex;align-items:center;justify-content:space-between;padding:0 9px;font-size:12px;color:#333;height:25px}
.pick{width:141px;height:25px;box-sizing:border-box;border:1px solid #aaa;display:flex;align-items:center;justify-content:space-between;padding:0 5px 0 4px;background:#fff}
.big-c{border-width:4px 4px 0;border-top-color:#222}
.dfoot{display:flex;justify-content:flex-end;gap:5px;padding:13px 16px 0 0;margin-left:-10px}
.ok,.cancel{width:54px;height:25px;box-sizing:border-box;text-align:center;font-size:12px;line-height:24px}
.ok{background:#6fb0c9;color:#fff}
.cancel{background:#dadada;border:1px solid #a8a8a8;color:#333}
.mark{position:absolute;left:9px;top:69px;pointer-events:none}
</style>
